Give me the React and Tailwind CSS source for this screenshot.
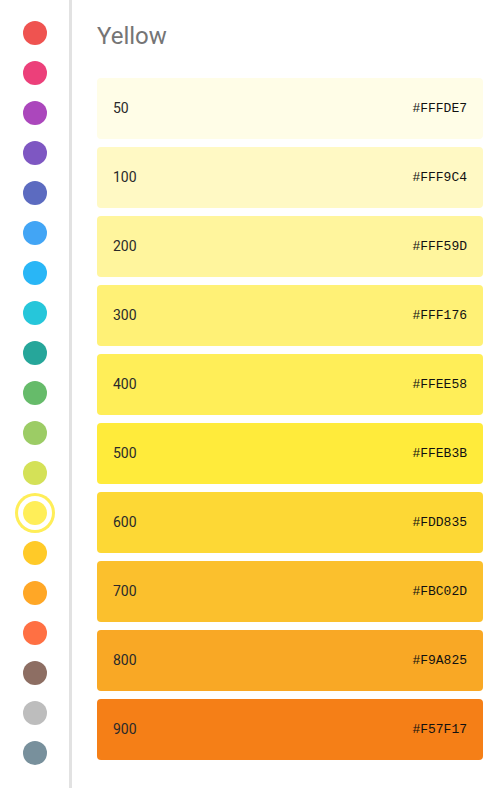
const dots = [
  "#EF5350", "#EC407A", "#AB47BC", "#7E57C2", "#5C6BC0", "#42A5F5", "#29B6F6",
  "#26C6DA", "#26A69A", "#66BB6A", "#9CCC65", "#D4E157", "#FFEE58", "#FFCA28",
  "#FFA726", "#FF7043", "#8D6E63", "#BDBDBD", "#78909C",
];

const shades = [
  { name: "50", hex: "#FFFDE7" },
  { name: "100", hex: "#FFF9C4" },
  { name: "200", hex: "#FFF59D" },
  { name: "300", hex: "#FFF176" },
  { name: "400", hex: "#FFEE58" },
  { name: "500", hex: "#FFEB3B" },
  { name: "600", hex: "#FDD835" },
  { name: "700", hex: "#FBC02D" },
  { name: "800", hex: "#F9A825" },
  { name: "900", hex: "#F57F17" },
];

const App = () => {
  const selected = 12;

  return (
    <div className="flex h-[788px] w-[504px] bg-white font-['Roboto',sans-serif]">
      <div className="flex w-[69px] shrink-0 flex-col items-center gap-4 pt-[21px]">
        {dots.map((c, i) => (
          <div
            key={c}
            className={
              i === selected
                ? "h-6 w-6 rounded-full ring-3 ring-[#FFEE58] ring-offset-[5px] ring-offset-white"
                : "h-6 w-6 rounded-full"
            }
            style={{ backgroundColor: c }}
          />
        ))}
      </div>
      <div className="w-[3px] shrink-0 bg-[#e2e2e2]" />
      <div className="flex-1 pl-[25px] pr-[21px]">
        <h1 className="mt-[22px] h-[28px] text-[24px] leading-[28px] text-[#757575]">Yellow</h1>
        <div className="mt-[28px] flex flex-col gap-2">
          {shades.map((s) => (
            <div
              key={s.name}
              className="flex h-[61px] items-center justify-between rounded px-4 text-[#2a2a2a]"
              style={{ backgroundColor: s.hex }}
            >
              <span className="text-[14px]">{s.name}</span>
              <span className="font-['Liberation_Mono',monospace] text-[13px] text-[#111]">{s.hex}</span>
            </div>
          ))}
        </div>
      </div>
    </div>
  );
};

export default App;
